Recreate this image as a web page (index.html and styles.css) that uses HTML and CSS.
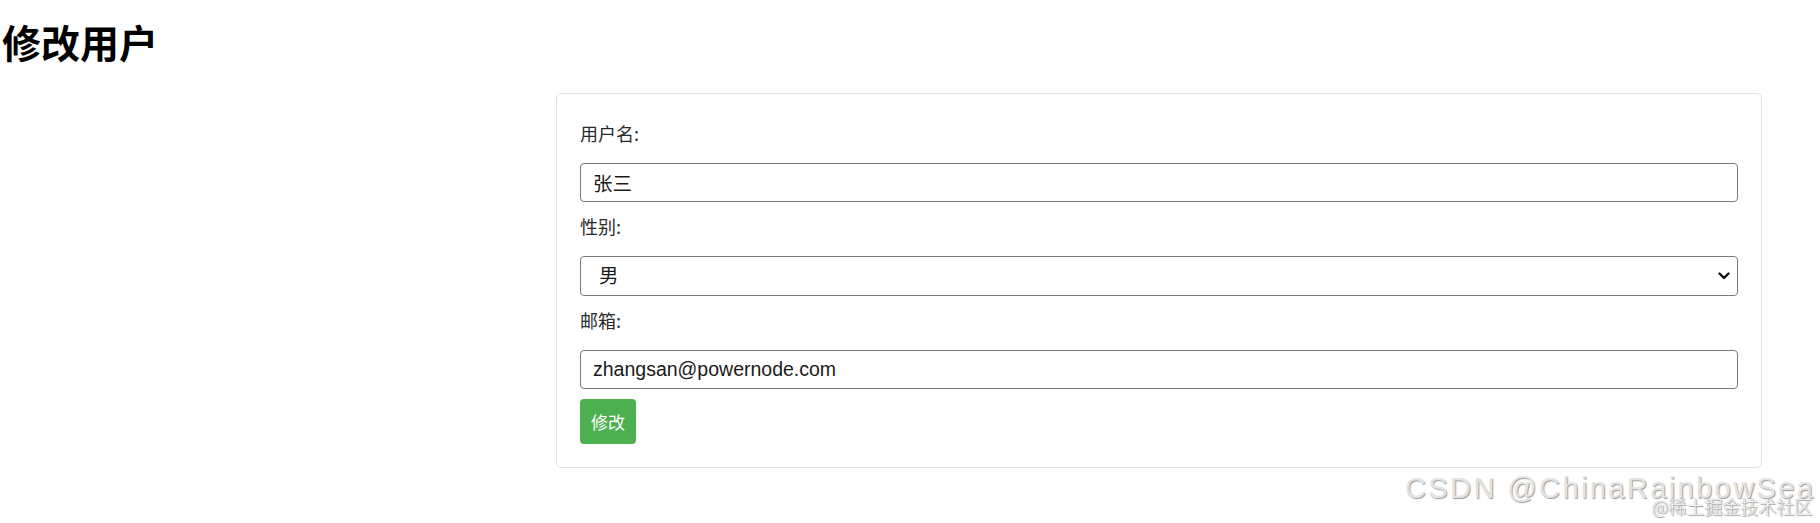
FILE: index.html
```html
<!DOCTYPE html>
<html lang="zh-CN">
<head>
<meta charset="utf-8">
<title>修改用户</title>
<link rel="stylesheet" href="styles.css">
</head>
<body>
<div class="page">
  <h1 class="title">修改用户</h1>
  <form class="card">
    <label class="label" for="username">用户名:</label>
    <input class="control" id="username" type="text" value="张三">
    <label class="label" for="gender">性别:</label>
    <div class="select-wrap">
      <select class="control control--select" id="gender">
        <option>男</option>
        <option>女</option>
      </select>
      <svg class="chevron" width="12" height="8" viewBox="0 0 12 8"><polyline points="1.5,1.5 6,6 10.5,1.5" fill="none" stroke="#111" stroke-width="2.4" stroke-linecap="round" stroke-linejoin="round"/></svg>
    </div>
    <label class="label" for="email">邮箱:</label>
    <input class="control control--last" id="email" type="text" value="zhangsan@powernode.com">
    <div class="actions"><button class="btn" type="button">修改</button></div>
  </form>
  <div class="wm wm--csdn">CSDN @ChinaRainbowSea</div>
  <div class="wm wm--juejin">@稀土掘金技术社区</div>
</div>
</body>
</html>
```
FILE: styles.css
```css
html, body {
  margin: 0;
  padding: 0;
  background: #fff;
}
.page {
  position: relative;
  width: 1820px;
  height: 523px;
  overflow: hidden;
  padding: 12px 0 0 2px;
  box-sizing: border-box;
  font-family: "Noto Sans CJK SC", "Liberation Sans", sans-serif;
  color: #222;
}
.title {
  margin: 0;
  font-size: 39px;
  font-weight: 700;
  line-height: 58px;
  color: #000;
}
.card {
  display: flex;
  flex-direction: column;
  align-items: stretch;
  margin: 23px 0 0 554px;
  width: 1206px;
  box-sizing: border-box;
  border: 1px solid #e3e3e3;
  border-radius: 5px;
  padding: 26px 23px 23px;
  background: #fff;
}
.label {
  display: block;
  font-size: 18px;
  line-height: 26px;
  color: #2a2a2a;
  margin-bottom: 17px;
}
.control {
  display: block;
  width: 100%;
  box-sizing: border-box;
  height: 39px;
  margin: 0 0 11px 0;
  border: 1px solid #7a7a7a;
  border-radius: 4px;
  padding: 0 12px;
  font-family: "Liberation Sans", "Noto Sans CJK SC", sans-serif;
  font-size: 19.5px;
  color: #1a1a1a;
  background: #fff;
  outline: none;
}
.control--last {
  margin-bottom: 10px;
}
.select-wrap {
  position: relative;
  margin-bottom: 11px;
}
.control--select {
  -webkit-appearance: none;
  appearance: none;
  height: 40px;
  margin: 0;
  padding-left: 18px;
}
.chevron {
  position: absolute;
  right: 8px;
  top: 16px;
  pointer-events: none;
}
.actions {
  display: flex;
}
.btn {
  height: 45px;
  padding: 0 11px;
  border: none;
  border-radius: 4px;
  background: #4caf50;
  color: #fff;
  font-family: "Noto Sans CJK SC", sans-serif;
  font-size: 17px;
  cursor: pointer;
}
.wm {
  position: absolute;
  white-space: nowrap;
  line-height: 1;
}
.wm--csdn {
  left: 1405px;
  top: 474px;
  font-family: "Liberation Sans", sans-serif;
  font-size: 29px;
  letter-spacing: 2.4px;
  color: #e4e4e4;
  text-shadow: 1px 1px 1px #9a9a9a;
}
.wm--juejin {
  left: 1652px;
  top: 497px;
  font-family: "Noto Sans CJK SC", sans-serif;
  font-size: 18px;
  font-weight: 300;
  color: #fafafa;
  text-shadow: 0 0 1px #777, 1px 1px 1px #999;
}
```
